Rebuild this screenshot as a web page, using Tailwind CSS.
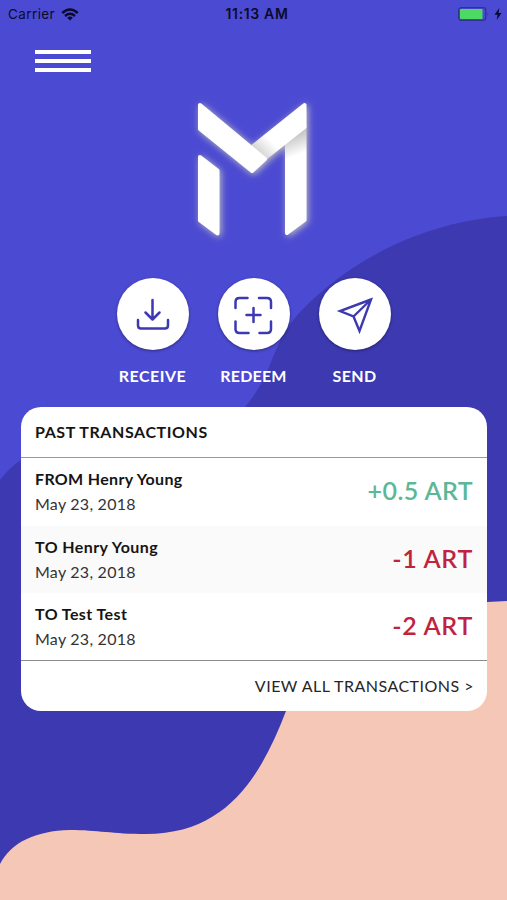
<!DOCTYPE html>
<html lang="en">
<head>
  <meta charset="UTF-8" />
  <meta name="viewport" content="width=device-width, initial-scale=1.0" />
  <title>Wallet</title>
  <script src="https://cdn.jsdelivr.net/npm/@tailwindcss/browser@4"></script>
</head>
<body class="bg-[#4b4ad2] font-['Lato',sans-serif]">
  <div class="relative isolate w-[507px] h-[900px] overflow-hidden flex flex-col">

    <!-- background waves -->
    <svg class="absolute inset-0 -z-10" width="507" height="900" viewBox="0 0 507 900">
      <path fill="#3c39b1" d="M507 216C420 222 350 262 305 307C268 344 278 368 245 407C200 460 90 420 21 460Q10 467 0 480V900H507Z" />
      <path fill="#f5c7b6" d="M507 601C400 606 320 620 286 711C262 773 229 834 146 834C112 834 98 830 70 830C35 831 12 842 0 864V900H507Z" />
    </svg>

    <!-- status bar -->
    <header class="h-7 pl-2 pr-[5px] grid grid-cols-3 items-center font-['Inter',sans-serif] text-[13.5px] text-[#0b0a2a]">
      <div class="flex items-center gap-[6px]">
        <span class="tracking-[0.4px]">Carrier</span>
        <svg width="18" height="13" viewBox="0 0 18 13" fill="none" stroke="#0b0a2a" stroke-width="2.4">
          <path d="M1.2 5Q9 -2 16.800 5" />
          <path d="M4 8Q9 3.700 14 8" />
          <path d="M9 12.500L6.200 9.700Q9 7.500 11.800 9.700Z" fill="#0b0a2a" stroke="none" />
        </svg>
      </div>
      <span class="text-center text-sm font-semibold tracking-[0.65px] pl-1">11:13 AM</span>
      <div class="flex items-center justify-end gap-[4px]">
        <svg width="33" height="14" viewBox="0 0 33 14">
          <rect x="1.700" y=".7" width="27" height="12.600" rx="2.500" fill="none" stroke="#32318f" stroke-width="1.300" />
          <rect x="3" y="2" width="22.500" height="10" rx=".8" fill="#4cd964" />
          <path d="M30.500 5Q32.300 7 30.500 9Z" fill="#32318f" />
        </svg>
        <svg width="8" height="12" viewBox="0 0 8 12"><path fill="#0b0a2a" d="M5.300 0L.5 6.700H3.600L2.700 12L7.500 5.100H4.500Z" /></svg>
      </div>
    </header>

    <button class="ml-[34.5px] mt-[22px] w-[56.5px] flex flex-col gap-[5px]" aria-label="Menu">
      <span class="w-full h-1 bg-white"></span>
      <span class="w-full h-1 bg-white"></span>
      <span class="w-full h-1 bg-white"></span>
    </button>

    <!-- logo -->
    <svg class="mx-auto mt-[18px]" width="147" height="160" viewBox="180 90 147 160">
      <defs>
        <filter id="glow" x="-20%" y="-20%" width="140%" height="140%">
          <feDropShadow dx="1.500" dy="1.500" stdDeviation="3.600" flood-color="#c4c4c0" flood-opacity=".95" />
        </filter>
        <linearGradient id="fold" gradientUnits="userSpaceOnUse" x1="259" y1="153" x2="271" y2="141">
          <stop offset="0" stop-color="#d4d4d4" />
          <stop offset="1" stop-color="#fff" />
        </linearGradient>
        <linearGradient id="leg" gradientUnits="userSpaceOnUse" x1="296" y1="135" x2="303" y2="153">
          <stop offset="0" stop-color="#c8c8c8" />
          <stop offset="1" stop-color="#fff" />
        </linearGradient>
      </defs>
      <g filter="url(#glow)" stroke-linejoin="round" stroke-width="4">
        <path fill="#fff" stroke="#fff" d="M200 157L217.500 170.500V233.500L200 220.500Z" />
        <path fill="url(#leg)" stroke="url(#leg)" d="M287 143L304.500 125V220L287 233Z" />
        <path fill="url(#fold)" stroke="url(#fold)" d="M304.500 105V127L264 159L252 147Z" />
        <path fill="#fff" stroke="#fff" d="M200 105V129L252 171L265 159Z" />
      </g>
    </svg>

    <!-- actions -->
    <nav class="mt-[28px] flex justify-center gap-[29px] text-white text-base font-bold text-center">
      <div class="w-[72px] flex flex-col items-center gap-[14px]">
        <button class="size-[72px] rounded-full bg-white shadow-[0_1px_3px_#00000066] flex items-center justify-center" aria-label="Receive">
          <svg width="72" height="72" viewBox="0 0 72 72" fill="none" stroke="#3c39b1" stroke-width="2.500" stroke-linecap="round" stroke-linejoin="round">
            <path d="M35.500 22V41M28.500 34.500L35.500 41.500L42.500 34.500M21 42V47.500Q21 50.500 24 50.500H48Q51 50.500 51 47.500V42" />
          </svg>
        </button>
        <span class="leading-6 whitespace-nowrap tracking-[0.5px]">RECEIVE</span>
      </div>
      <div class="w-[72px] flex flex-col items-center gap-[14px]">
        <button class="size-[72px] rounded-full bg-white shadow-[0_1px_3px_#00000066] flex items-center justify-center" aria-label="Redeem">
          <svg width="72" height="72" viewBox="0 0 72 72" fill="none" stroke="#3c39b1" stroke-width="2.500" stroke-linecap="round" stroke-linejoin="round">
            <path d="M35.500 30V44M28.500 37H42.500M17.500 30V24Q17.500 20 21.500 20H29.500M41 20H49Q53 20 53 24V30M17.500 43.500V51Q17.500 55 21.500 55H30.500M41.500 55H49Q53 55 53 51V43.500" />
          </svg>
        </button>
        <span class="leading-6 whitespace-nowrap tracking-[0.2px]">REDEEM</span>
      </div>
      <div class="w-[72px] flex flex-col items-center gap-[14px]">
        <button class="size-[72px] rounded-full bg-white shadow-[0_1px_3px_#00000066] flex items-center justify-center" aria-label="Send">
          <svg width="72" height="72" viewBox="0 0 72 72" fill="none" stroke="#3c39b1" stroke-width="2.400" stroke-linejoin="miter">
            <path d="M52 21.500L21 33L34.500 38.500L40.500 53Z M34.500 38.500L52 21.500" />
          </svg>
        </button>
        <span class="leading-6 whitespace-nowrap tracking-[0.4px]">SEND</span>
      </div>
    </nav>

    <!-- past transactions -->
    <main class="mx-[21px] mt-[19px] w-[466px] h-[304px] rounded-[20px] bg-white overflow-hidden text-base text-[#151515]">
      <h2 class="h-[51px] px-[14px] border-b border-[#9a9a9a] font-bold leading-[50px] tracking-[0.57px]">PAST TRANSACTIONS</h2>
      <ul>
        <li class="h-[68px] px-[14px] pb-[3px] flex items-center justify-between">
          <div>
            <p class="font-bold leading-[25px] tracking-[0.33px]">FROM Henry Young</p>
            <p class="leading-[25px] text-[#333] tracking-[0.25px]">May 23, 2018</p>
          </div>
          <span class="text-[25px] font-semibold tracking-[0.4px] text-[#5bb896]">+0.5 ART</span>
        </li>
        <li class="h-[67px] px-[14px] pb-px flex items-center justify-between bg-[#fafafa]">
          <div>
            <p class="font-bold leading-[25px] tracking-[0.42px]">TO Henry Young</p>
            <p class="leading-[25px] text-[#333] tracking-[0.25px]">May 23, 2018</p>
          </div>
          <span class="text-[25px] font-semibold tracking-[0.7px] text-[#c0233f]">-1 ART</span>
        </li>
        <li class="h-[67px] px-[14px] pb-px flex items-center justify-between">
          <div>
            <p class="font-bold leading-[25px] tracking-[0.42px]">TO Test Test</p>
            <p class="leading-[25px] text-[#333] tracking-[0.25px]">May 23, 2018</p>
          </div>
          <span class="text-[25px] font-semibold tracking-[0.7px] text-[#c0233f]">-2 ART</span>
        </li>
      </ul>
      <a class="block h-[51px] pl-[14px] pr-[13px] border-t border-[#8c8c8c] text-right leading-[50px] tracking-[0.48px] text-[#262626]">VIEW ALL TRANSACTIONS &gt;</a>
    </main>
  </div>
</body>
</html>
